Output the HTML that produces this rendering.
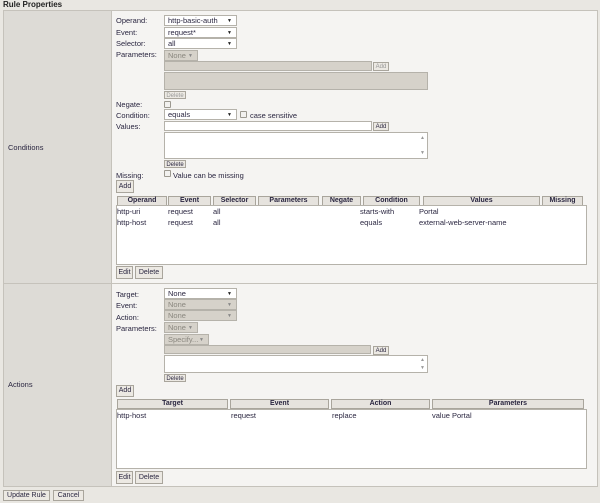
<!DOCTYPE html>
<html><head><meta charset="utf-8"><style>
*{box-sizing:border-box;margin:0;padding:0}
body{width:600px;height:503px;background:#e9e7e2;font-family:"Liberation Sans",Arial,sans-serif;font-size:7.5px;color:#2a2640;position:relative;overflow:hidden}
.a{position:absolute;white-space:nowrap}
.sel{position:absolute;background:#fff;border:1px solid #b5b2aa;height:11px;padding:1px 3px;line-height:8px}
.sel.g{background:#d6d2ca;color:#8a877f}
.sel:after{content:"▼";position:absolute;right:4px;top:1px;font-size:5px;color:#222}
.sel.g:after{color:#888}
.btn{position:absolute;background:#ece9e3;border:1px solid #a9a59c;line-height:9px;text-align:center;font-size:7px}
.box{position:absolute;background:#fff;border:1px solid #b5b2aa}
.gbox{position:absolute;background:#d6d2ca;border:1px solid #b5b2aa}
.cb{position:absolute;width:7px;height:7px;border:1px solid #9c9990;background:#f2f1ef;border-radius:1px}
.th{position:absolute;background:#e6e3de;border:1px solid #a9a59c;font-weight:bold;text-align:center;height:10px;line-height:8px;font-size:7px}
.sc{position:absolute;right:2px;font-size:5px;color:#999}
</style></head><body>
<div class="a" style="left:3px;top:0;font-weight:bold;font-size:8px;color:#222">Rule Properties</div>
<div class="a" style="left:3px;top:10px;width:595px;height:477px;border:1px solid #c5c2bb;background:#f5f4f2"></div>
<div class="a" style="left:4px;top:11px;width:108px;height:475px;background:#dddbd6;border-right:1px solid #c5c2bb"></div>
<div class="a" style="left:4px;top:283px;width:593px;height:1px;background:#c5c2bb"></div>
<div class="a" style="left:8px;top:143px">Conditions</div>
<div class="a" style="left:8px;top:380px">Actions</div>

<div class="a" style="left:116px;top:16px">Operand:</div>
<div class="sel" style="left:164px;top:15px;width:73px">http-basic-auth</div>
<div class="a" style="left:116px;top:28px">Event:</div>
<div class="sel" style="left:164px;top:27px;width:73px">request*</div>
<div class="a" style="left:116px;top:39px">Selector:</div>
<div class="sel" style="left:164px;top:38px;width:73px">all</div>
<div class="a" style="left:116px;top:50px">Parameters:</div>
<div class="sel g" style="left:164px;top:50px;width:34px">None</div>
<div class="gbox" style="left:164px;top:61px;width:208px;height:10px"></div>
<div class="btn" style="left:373px;top:62px;width:16px;height:9px;font-size:6px;color:#999">Add</div>
<div class="gbox" style="left:164px;top:72px;width:264px;height:18px"></div>
<div class="btn" style="left:164px;top:91px;width:22px;height:8px;font-size:6px;color:#999">Delete</div>
<div class="a" style="left:116px;top:100px">Negate:</div>
<div class="cb" style="left:164px;top:101px"></div>
<div class="a" style="left:116px;top:111px">Condition:</div>
<div class="sel" style="left:164px;top:109px;width:73px">equals</div>
<div class="cb" style="left:240px;top:111px"></div>
<div class="a" style="left:250px;top:111px">case sensitive</div>
<div class="a" style="left:116px;top:122px">Values:</div>
<div class="box" style="left:164px;top:121px;width:208px;height:10px"></div>
<div class="btn" style="left:373px;top:122px;width:16px;height:9px;font-size:6px">Add</div>
<div class="box" style="left:164px;top:132px;width:264px;height:27px"><span class="sc" style="top:2px">▲</span><span class="sc" style="bottom:2px">▼</span></div>
<div class="btn" style="left:164px;top:160px;width:22px;height:8px;font-size:6px">Delete</div>
<div class="a" style="left:116px;top:171px">Missing:</div>
<div class="cb" style="left:164px;top:170px"></div>
<div class="a" style="left:173px;top:171px">Value can be missing</div>
<div class="btn" style="left:116px;top:180px;width:18px;height:13px;line-height:11px">Add</div>

<div class="th" style="left:117px;top:196px;width:50px">Operand</div>
<div class="th" style="left:168px;top:196px;width:43px">Event</div>
<div class="th" style="left:213px;top:196px;width:43px">Selector</div>
<div class="th" style="left:258px;top:196px;width:61px">Parameters</div>
<div class="th" style="left:322px;top:196px;width:39px">Negate</div>
<div class="th" style="left:363px;top:196px;width:57px">Condition</div>
<div class="th" style="left:423px;top:196px;width:117px">Values</div>
<div class="th" style="left:542px;top:196px;width:41px">Missing</div>
<div class="box" style="left:116px;top:205px;width:471px;height:60px"></div>
<div class="a" style="left:117px;top:207px">http-uri</div><div class="a" style="left:168px;top:207px">request</div><div class="a" style="left:213px;top:207px">all</div><div class="a" style="left:360px;top:207px">starts-with</div><div class="a" style="left:419px;top:207px">Portal</div>
<div class="a" style="left:117px;top:218px">http-host</div><div class="a" style="left:168px;top:218px">request</div><div class="a" style="left:213px;top:218px">all</div><div class="a" style="left:360px;top:218px">equals</div><div class="a" style="left:419px;top:218px">external-web-server-name</div>
<div class="btn" style="left:116px;top:266px;width:17px;height:13px;line-height:11px">Edit</div>
<div class="btn" style="left:135px;top:266px;width:28px;height:13px;line-height:11px">Delete</div>

<div class="a" style="left:116px;top:290px">Target:</div>
<div class="sel" style="left:164px;top:288px;width:73px">None</div>
<div class="a" style="left:116px;top:301px">Event:</div>
<div class="sel g" style="left:164px;top:299px;width:73px">None</div>
<div class="a" style="left:116px;top:313px">Action:</div>
<div class="sel g" style="left:164px;top:310px;width:73px">None</div>
<div class="a" style="left:116px;top:324px">Parameters:</div>
<div class="sel g" style="left:164px;top:322px;width:34px">None</div>
<div class="sel g" style="left:164px;top:334px;width:45px">Specify...</div>
<div class="gbox" style="left:164px;top:345px;width:207px;height:9px"></div>
<div class="btn" style="left:373px;top:346px;width:16px;height:9px;font-size:6px">Add</div>
<div class="box" style="left:164px;top:355px;width:264px;height:18px"><span class="sc" style="top:1px">▲</span><span class="sc" style="bottom:1px">▼</span></div>
<div class="btn" style="left:164px;top:374px;width:22px;height:8px;font-size:6px">Delete</div>
<div class="btn" style="left:116px;top:385px;width:18px;height:12px;line-height:10px">Add</div>

<div class="th" style="left:117px;top:399px;width:111px">Target</div>
<div class="th" style="left:230px;top:399px;width:99px">Event</div>
<div class="th" style="left:331px;top:399px;width:99px">Action</div>
<div class="th" style="left:432px;top:399px;width:152px">Parameters</div>
<div class="box" style="left:116px;top:409px;width:471px;height:60px"></div>
<div class="a" style="left:117px;top:411px">http-host</div><div class="a" style="left:231px;top:411px">request</div><div class="a" style="left:332px;top:411px">replace</div><div class="a" style="left:432px;top:411px">value Portal</div>
<div class="btn" style="left:116px;top:471px;width:17px;height:13px;line-height:11px">Edit</div>
<div class="btn" style="left:135px;top:471px;width:28px;height:13px;line-height:11px">Delete</div>

<div class="btn" style="left:3px;top:490px;width:47px;height:11px">Update Rule</div>
<div class="btn" style="left:53px;top:490px;width:31px;height:11px">Cancel</div>
</body></html>
